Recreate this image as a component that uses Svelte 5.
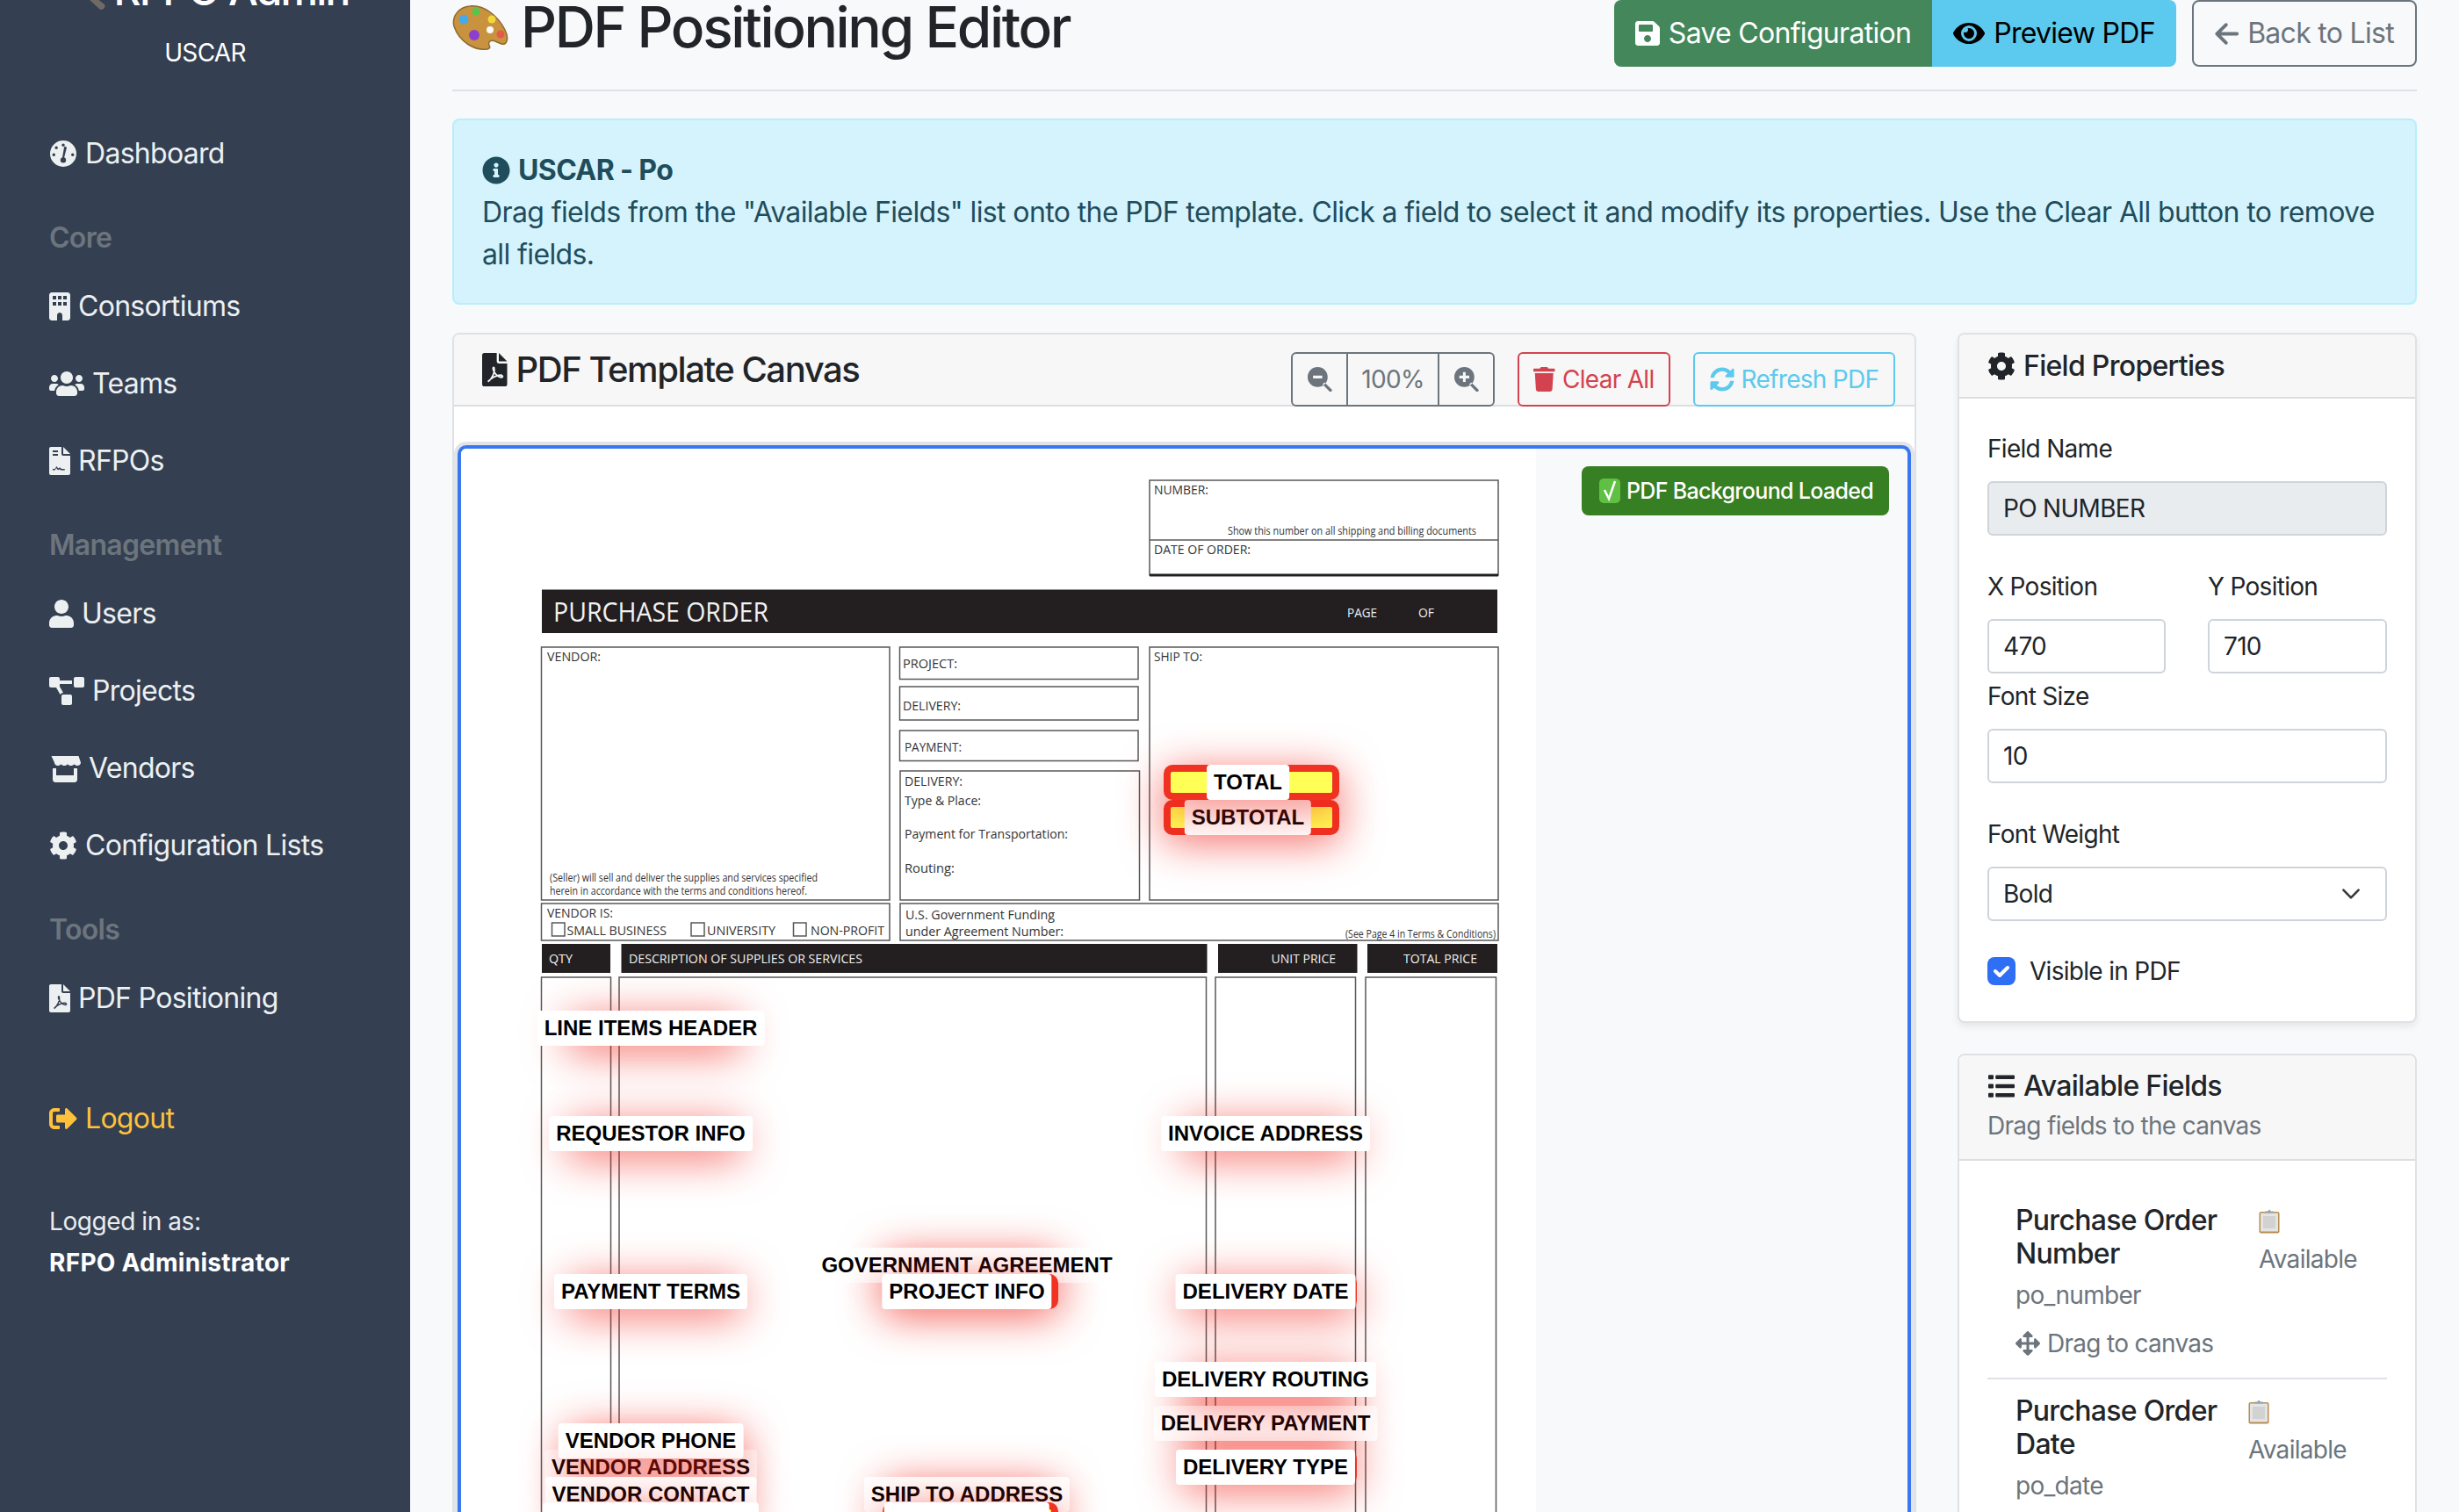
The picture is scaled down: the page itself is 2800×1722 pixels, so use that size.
<script>
  const icons = {
    gauge: { w: 512, d: 'M256 16a240 240 0 1 0 0 480 240 240 0 1 0 0-480zM256 70a28 28 0 1 1 0 56 28 28 0 0 1 0-56zM130 120a28 28 0 1 1 0 56 28 28 0 0 1 0-56zM84 246a28 28 0 1 1 0 56 28 28 0 0 1 0-56zM428 246a28 28 0 1 1 0 56 28 28 0 0 1 0-56zM205 372a51 51 0 1 0 102 0c0-22-14-40-33-47l44-175a24 24 0 0 0-46-10l-32 185c-20 7-35 25-35 47z' },
    building: { w: 384, d: 'M48 0h288c26 0 48 22 48 48v416c0 26-22 48-48 48H240v-96c0-26-22-48-48-48s-48 22-48 48v96H48c-26 0-48-22-48-48V48C0 22 22 0 48 0zM64 64h64v64H64zM160 64h64v64h-64zM256 64h64v64h-64zM64 176h64v64H64zM160 176h64v64h-64zM256 176h64v64h-64z' },
    users: { w: 640, d: 'M96 224c35.3 0 64-28.7 64-64s-28.7-64-64-64-64 28.7-64 64 28.7 64 64 64zm448 0c35.3 0 64-28.7 64-64s-28.7-64-64-64-64 28.7-64 64 28.7 64 64 64zm32 32h-64c-17.6 0-33.5 7.1-45.1 18.6 40.3 22.1 68.9 62 75.1 109.4h66c17.7 0 32-14.3 32-32v-32c0-35.3-28.7-64-64-64zm-256 0c61.9 0 112-50.1 112-112S381.9 32 320 32 208 82.1 208 144s50.1 112 112 112zm76.8 32h-8.3c-20.8 10-43.9 16-68.5 16s-47.6-6-68.5-16h-8.3C179.6 288 128 339.6 128 403.2V432c0 26.5 21.5 48 48 48h288c26.5 0 48-21.5 48-48v-28.8c0-63.6-51.6-115.2-115.2-115.2zm-223.7-13.4C161.5 263.1 145.6 256 128 256H64c-35.3 0-64 28.7-64 64v32c0 17.7 14.3 32 32 32h65.9c6.3-47.4 34.9-87.3 75.2-109.4z' },
    invoice: { w: 384, d: 'M224 0H32C14 0 0 14 0 32v448c0 18 14 32 32 32h320c18 0 32-14 32-32V160H256c-18 0-32-14-32-32V0zM256 0l128 128H256zM64 64h96v32H64zM64 128h96v32H64zM64 400h40l30-50 30 40 30-20 30 30h60v24h-75l-20-20-30 20-30-40-25 40H64z' },
    pdf: { w: 384, d: 'M224 0H32C14 0 0 14 0 32v448c0 18 14 32 32 32h320c18 0 32-14 32-32V160H256c-18 0-32-14-32-32V0zM256 0l128 128H256z', hole: 'M90 440C140 410 200 300 185 235C180 210 160 220 170 255C190 325 260 385 305 372C325 365 310 340 280 340C220 340 130 390 90 440Z' },
    user: { w: 448, d: 'M224 256c70.7 0 128-57.3 128-128S294.7 0 224 0 96 57.3 96 128s57.3 128 128 128zm89.6 32h-16.7c-22.2 10.2-46.9 16-72.9 16s-50.6-5.8-72.9-16h-16.7C60.2 288 0 348.2 0 422.4V464c0 26.5 21.5 48 48 48h352c26.5 0 48-21.5 48-48v-41.6c0-74.2-60.2-134.4-134.4-134.4z' },
    diagram: { w: 640, d: 'M384 320H256c-17.67 0-32 14.33-32 32v128c0 17.67 14.33 32 32 32h128c17.67 0 32-14.33 32-32V352c0-17.67-14.33-32-32-32zM192 32c0-17.67-14.33-32-32-32H32C14.33 0 0 14.33 0 32v128c0 17.67 14.33 32 32 32h95.72l73.16 128.04C211.98 300.98 232.4 288 256 288h.28L192 175.51V128h224V64H192V32zM608 0H480c-17.67 0-32 14.33-32 32v128c0 17.67 14.33 32 32 32h128c17.67 0 32-14.33 32-32V32c0-17.67-14.33-32-32-32z' },
    store: { w: 576, d: 'M40 32h496l40 120c0 35-29 56-60 56-25 0-45-14-60-30-12 16-34 30-60 30s-48-14-60-30c-12 16-34 30-60 30s-48-14-60-30c-15 16-35 30-60 30-31 0-60-21-60-56zM64 256h64v128h320V256h64v208c0 26-22 48-48 48H112c-26 0-48-22-48-48z' },
    cog: { w: 512, d: 'M487.4 315.7l-42.6-24.6c4.3-23.2 4.3-47 0-70.2l42.6-24.6c4.9-2.8 7.1-8.6 5.5-14-11.1-35.6-30-67.8-54.7-94.6-3.8-4.1-10-5.1-14.8-2.3L380.8 110c-17.9-15.4-38.5-27.3-60.8-35.1V25.8c0-5.6-3.9-10.5-9.4-11.7-36.7-8.2-74.3-7.8-109.2 0-5.5 1.2-9.4 6.1-9.4 11.7V75c-22.2 7.9-42.8 19.8-60.8 35.1L88.7 85.5c-4.9-2.8-11-1.9-14.8 2.3-24.7 26.7-43.6 58.9-54.7 94.6-1.7 5.4.6 11.2 5.5 14L67.3 221c-4.3 23.2-4.3 47 0 70.2l-42.6 24.6c-4.9 2.8-7.1 8.6-5.5 14 11.1 35.6 30 67.8 54.7 94.6 3.8 4.1 10 5.1 14.8 2.3l42.6-24.6c17.9 15.4 38.5 27.3 60.8 35.1v49.2c0 5.6 3.9 10.5 9.4 11.7 36.7 8.2 74.3 7.8 109.2 0 5.5-1.2 9.4-6.1 9.4-11.7v-49.2c22.2-7.9 42.8-19.8 60.8-35.1l42.6 24.6c4.9 2.8 11 1.9 14.8-2.3 24.7-26.7 43.6-58.9 54.7-94.6 1.5-5.5-.7-11.3-5.6-14.1zM256 336c-44.1 0-80-35.9-80-80s35.9-80 80-80 80 35.9 80 80-35.9 80-80 80z' },
    logout: { w: 512, d: 'M497 273L329 441c-15 15-41 4.5-41-17v-96H152c-13.3 0-24-10.7-24-24v-96c0-13.3 10.7-24 24-24h136V88c0-21.4 25.9-32 41-17l168 168c9.3 9.4 9.3 24.6 0 34zM192 436v-40c0-6.6-5.4-12-12-12H96c-17.7 0-32-14.3-32-32V160c0-17.7 14.3-32 32-32h84c6.6 0 12-5.4 12-12V76c0-6.6-5.4-12-12-12H96c-53 0-96 43-96 96v192c0 53 43 96 96 96h84c6.6 0 12-5.4 12-12z' },
    save: { w: 448, d: 'M433.941 129.941l-83.882-83.882A48 48 0 0 0 316.118 32H48C21.49 32 0 53.49 0 80v352c0 26.51 21.49 48 48 48h352c26.51 0 48-21.49 48-48V163.882a48 48 0 0 0-14.059-33.941zM224 416c-35.346 0-64-28.654-64-64 0-35.346 28.654-64 64-64s64 28.654 64 64c0 35.346-28.654 64-64 64zm96-304.52V212c0 6.627-5.373 12-12 12H76c-6.627 0-12-5.373-12-12V108c0-6.627 5.373-12 12-12h228.52c3.183 0 6.235 1.264 8.485 3.515l3.48 3.48A11.996 11.996 0 0 1 320 111.48z' },
    eye: { w: 576, d: 'M572.52 241.4C518.29 135.59 410.93 64 288 64S57.68 135.64 3.48 241.41a32.35 32.35 0 0 0 0 29.19C57.71 376.41 165.07 448 288 448s230.32-71.64 284.52-177.41a32.35 32.35 0 0 0 0-29.19zM288 400a144 144 0 1 1 144-144 143.93 143.93 0 0 1-144 144zm0-240a95.31 95.31 0 0 0-25.31 3.79 47.85 47.85 0 0 1-66.9 66.9A95.78 95.78 0 1 0 288 160z' },
    back: { w: 448, d: 'M18 233L190 61a32 32 0 0 1 45 45L118 224h298a32 32 0 0 1 0 64H118l117 118a32 32 0 0 1-45 45L18 279a32 32 0 0 1 0-46z' },
    info: { w: 512, d: 'M256 8C119.043 8 8 119.083 8 256c0 136.997 111.043 248 248 248s248-111.003 248-248C504 119.083 392.957 8 256 8zm0 110c23.196 0 42 18.804 42 42s-18.804 42-42 42-42-18.804-42-42 18.804-42 42-42zm56 254c0 6.627-5.373 12-12 12h-88c-6.627 0-12-5.373-12-12v-24c0-6.627 5.373-12 12-12h12v-64h-12c-6.627 0-12-5.373-12-12v-24c0-6.627 5.373-12 12-12h64c6.627 0 12 5.373 12 12v100h12c6.627 0 12 5.373 12 12v24z' },
    zoomOut: { w: 512, d: 'M208 0a208 208 0 1 0 0 416 208 208 0 1 0 0-416zM112 180h192v56H112zM352 320L500 468a30 30 0 0 1-42 42L310 362z' },
    zoomIn: { w: 512, d: 'M208 0a208 208 0 1 0 0 416 208 208 0 1 0 0-416zM180 104h56v76h76v56h-76v76h-56v-76h-76v-56h76zM352 320L500 468a30 30 0 0 1-42 42L310 362z' },
    trash: { w: 448, d: 'M432 32H312l-9.4-18.7A24 24 0 0 0 281.1 0H166.8a23.72 23.72 0 0 0-21.4 13.3L136 32H16A16 16 0 0 0 0 48v32a16 16 0 0 0 16 16h416a16 16 0 0 0 16-16V48a16 16 0 0 0-16-16zM53.2 467a48 48 0 0 0 47.9 45h245.8a48 48 0 0 0 47.9-45L416 128H32z' },
    sync: { w: 512, d: 'M370.72 133.28C339.458 104.008 298.888 87.962 255.848 88c-77.458.068-144.328 53.178-162.791 126.85-1.344 5.363-6.122 9.15-11.651 9.15H24.103c-7.498 0-13.194-6.807-11.807-14.176C33.933 94.924 134.813 8 256 8c66.448 0 126.791 26.136 171.315 68.685L463.03 40.97C478.149 25.851 504 36.559 504 57.941V192c0 13.255-10.745 24-24 24H345.941c-21.382 0-32.09-25.851-16.971-40.971l41.75-41.749zM32 296h134.059c21.382 0 32.09 25.851 16.971 40.971l-41.75 41.75c31.262 29.273 71.835 45.319 114.876 45.28 77.418-.07 144.315-53.144 162.787-126.849 1.344-5.363 6.122-9.15 11.651-9.15h57.304c7.498 0 13.194 6.807 11.807 14.176C478.067 417.076 377.187 504 256 504c-66.448 0-126.791-26.136-171.315-68.685L48.97 471.03C33.851 486.149 8 475.441 8 454.059V320c0-13.255 10.745-24 24-24z' },
    list: { w: 512, d: 'M16 68a16 16 0 0 1 16-16h64a16 16 0 0 1 16 16v48a16 16 0 0 1-16 16H32a16 16 0 0 1-16-16zM16 232a16 16 0 0 1 16-16h64a16 16 0 0 1 16 16v48a16 16 0 0 1-16 16H32a16 16 0 0 1-16-16zM16 396a16 16 0 0 1 16-16h64a16 16 0 0 1 16 16v48a16 16 0 0 1-16 16H32a16 16 0 0 1-16-16zM148 72a16 16 0 0 1 16-16h316a16 16 0 0 1 16 16v40a16 16 0 0 1-16 16H164a16 16 0 0 1-16-16zM148 236a16 16 0 0 1 16-16h316a16 16 0 0 1 16 16v40a16 16 0 0 1-16 16H164a16 16 0 0 1-16-16zM148 400a16 16 0 0 1 16-16h316a16 16 0 0 1 16 16v40a16 16 0 0 1-16 16H164a16 16 0 0 1-16-16z' },
    move: { w: 512, d: 'M352.201 425.775l-79.196 79.196c-9.373 9.373-24.568 9.373-33.941 0l-79.196-79.196c-15.119-15.119-4.411-40.971 16.971-40.97h51.162L228 284H127.196v51.162c0 21.382-25.851 32.09-40.971 16.971L7.029 272.937c-9.373-9.373-9.373-24.569 0-33.941L86.225 159.8c15.119-15.119 40.971-4.411 40.971 16.971V228H228V127.196h-51.23c-21.382 0-32.09-25.851-16.971-40.971l79.196-79.196c9.373-9.373 24.568-9.373 33.941 0l79.196 79.196c15.119 15.119 4.411 40.971-16.971 40.971h-51.162V228h100.804v-51.162c0-21.382 25.851-32.09 40.97-16.971l79.196 79.196c9.373 9.373 9.373 24.569 0 33.941L425.773 352.2c-15.119 15.119-40.971 4.411-40.97-16.971V284H284v100.804h51.23c21.382 0 32.09 25.851 16.971 40.971z' }
  };

  const nav = [
    { type: 'link', icon: 'gauge', label: 'Dashboard' },
    { type: 'title', label: 'Core' },
    { type: 'link', icon: 'building', label: 'Consortiums' },
    { type: 'link', icon: 'users', label: 'Teams' },
    { type: 'link', icon: 'invoice', label: 'RFPOs' },
    { type: 'title', label: 'Management' },
    { type: 'link', icon: 'user', label: 'Users' },
    { type: 'link', icon: 'diagram', label: 'Projects' },
    { type: 'link', icon: 'store', label: 'Vendors' },
    { type: 'link', icon: 'cog', label: 'Configuration Lists' },
    { type: 'title', label: 'Tools' },
    { type: 'link', icon: 'pdf', label: 'PDF Positioning' }
  ];

  // printed boxes of the purchase order form, in page pixels
  const boxes = [
    [1309, 547, 397, 108], [616.5, 737, 396.5, 288], [616.5, 1029, 396.5, 42],
    [1024.5, 737, 271.5, 36.5], [1024.5, 782, 271.5, 38], [1024.5, 832, 271.5, 34.5],
    [1025, 878, 272.5, 147], [1309, 737, 397, 288], [1025, 1029, 681, 42],
    [628.5, 1051, 14.5, 15], [787, 1051, 15, 15], [903.5, 1051, 14.5, 15],
    [616.5, 1113, 79, 700], [705, 1113, 668.5, 700], [1384, 1113, 159.5, 700], [1555, 1113, 148.5, 700]
  ];
  const bars = [
    [617, 671.5, 1088, 49.5], [617, 1075, 78, 33], [707.5, 1075, 667, 33], [1387, 1075, 158.5, 33], [1557, 1075, 148, 33]
  ];
  const printed = [
    ['NUMBER:', 1314, 563, 62, 15], ['Show this number on all shipping and billing documents', 1398, 609, 283, 13],
    ['DATE OF ORDER:', 1314, 631, 110, 15], ['VENDOR:', 623, 752.5, 61, 15],
    ['(Seller) will sell and deliver the supplies and services specified', 626, 1004, 305, 12],
    ['herein in accordance with the terms and conditions hereof.', 626, 1019, 293, 12],
    ['VENDOR IS:', 623, 1044.5, 75, 15], ['SMALL BUSINESS', 645.5, 1065, 113.5, 15],
    ['UNIVERSITY', 805, 1065, 78, 15], ['NON-PROFIT', 923, 1065, 84, 15],
    ['PROJECT:', 1028, 761, 62, 15], ['DELIVERY:', 1028, 809, 66, 15], ['PAYMENT:', 1030, 856, 65, 15],
    ['DELIVERY:', 1030, 895, 66, 15], ['Type & Place:', 1030, 917, 87, 15],
    ['Payment for Transportation:', 1030, 954.5, 186, 15], ['Routing:', 1030, 994, 57, 15],
    ['SHIP TO:', 1314, 752.5, 55, 15], ['U.S. Government Funding', 1031, 1046.5, 170, 15],
    ['under Agreement Number:', 1031, 1065.5, 180, 15], ['(See Page 4 in Terms & Conditions)', 1532, 1068, 171, 13]
  ];
  const printedLight = [
    ['PURCHASE ORDER', 630, 708, 245, 31], ['PAGE', 1534, 703, 34, 14], ['OF', 1615, 703, 18, 14],
    ['QTY', 625, 1097, 27, 14], ['DESCRIPTION OF SUPPLIES OR SERVICES', 716, 1097, 266, 14],
    ['UNIT PRICE', 1447.5, 1097, 73.5, 14], ['TOTAL PRICE', 1598, 1097, 84, 14]
  ];

  // dropped fields: [label, box left, box top] in page pixels, later ones paint over earlier ones
  const fields = [
    ['SUBTOTAL', 1325, 911], ['TOTAL', 1325, 871],
    ['LINE ITEMS HEADER', 645, 1151], ['REQUESTOR INFO', 645, 1271], ['PAYMENT TERMS', 645, 1451],
    ['VENDOR ADDRESS', 645, 1651], ['VENDOR PHONE', 645, 1621], ['VENDOR CONTACT', 645, 1682], ['VENDOR COMPANY', 645, 1711],
    ['GOVERNMENT AGREEMENT', 1005, 1421], ['PROJECT INFO', 1005, 1451],
    ['SHIP TO ADDRESS', 1005, 1682], ['SHIP TO NAME', 1005, 1711],
    ['INVOICE ADDRESS', 1345, 1271], ['DELIVERY PAYMENT', 1345, 1601], ['DELIVERY ROUTING', 1345, 1551],
    ['DELIVERY TYPE', 1345, 1651], ['DELIVERY DATE', 1345, 1451]
  ];
</script>

{#snippet icon(name, height)}
  <svg class="icon" viewBox="0 0 {icons[name].w} 512" height={height} width={height * icons[name].w / 512}>
    <path fill="currentColor" fill-rule="evenodd" d={icons[name].d} />
    {#if icons[name].hole}
      <path class="hole" d={icons[name].hole} />
    {/if}
  </svg>
{/snippet}

{#snippet clipboard()}
  <svg class="clip" viewBox="0 0 24 28" width="24" height="28">
    <rect x="0.5" y="3" width="23" height="24.5" rx="2" fill="#b98c52" />
    <rect x="2" y="4.5" width="20" height="21" fill="#e4e4e4" />
    <rect x="5" y="8" width="14" height="14" fill="#d2d2d2" />
    <path d="M7 4.5h10V2.5h-3L12 0.5 10 2.5H7z" fill="#9aa3ad" />
  </svg>
{/snippet}

<div class="app">
  <aside class="sidebar">
    <div class="brand">
      <svg viewBox="0 0 58 14" width="58" height="14">
        <path d="M38 0L48 0L57 7A4 4 0 0 1 51 12z" fill="#6f6a66" />
      </svg>
      <span>RFPO Admin</span>
    </div>
    <div class="org">USCAR</div>
    <nav>
      {#each nav as item}
        {#if item.type === 'title'}
          <div class="nav-title">{item.label}</div>
        {:else}
          <a class="nav-link" href="#top">{@render icon(item.icon, 32)}<span>{item.label}</span></a>
        {/if}
      {/each}
      <a class="nav-link logout" href="#top">{@render icon('logout', 32)}<span>Logout</span></a>
    </nav>
    <div class="whoami">
      <div>Logged in as:</div>
      <strong>RFPO Administrator</strong>
    </div>
  </aside>

  <main class="main">
    <header class="page-head">
      <h1>
        <svg class="palette" viewBox="0 0 64 52" width="64" height="52">
          <path d="M20 1C36-1 52 12 60 28c5 10 2 18-4 16-6-2-11-6-14-2-2 4 4 6-2 8C26 52 8 42 2 24-1 12 8 2 20 1z" fill="#c8923e" stroke="#8d6a30" stroke-width="1.5" />
          <circle cx="13" cy="16" r="5.5" fill="#4aa8e8" />
          <circle cx="27" cy="7" r="4.5" fill="#5cc24a" />
          <circle cx="45" cy="16" r="4.5" fill="#f2d63c" />
          <circle cx="25" cy="34" r="6" fill="#8a3fd0" />
          <circle cx="43" cy="28" r="4" fill="#f8f9fa" />
          <circle cx="55" cy="33" r="4.5" fill="#e8584a" />
        </svg>
        PDF Positioning Editor
      </h1>
      <div class="actions">
        <div class="btn-group">
          <button class="btn save">{@render icon('save', 32)}Save Configuration</button>
          <button class="btn preview">{@render icon('eye', 32)}Preview PDF</button>
        </div>
        <button class="btn back">{@render icon('back', 31)}Back to List</button>
      </div>
    </header>

    <section class="alert">
      <strong>{@render icon('info', 32)}USCAR - Po</strong>
      <div>Drag fields from the "Available Fields" list onto the PDF template. Click a field to select it and modify its properties. Use the Clear All button to remove all fields.</div>
    </section>

    <div class="workspace">
      <section class="card canvas-card">
        <div class="card-head canvas-head">
          <h2>{@render icon('pdf', 38)}PDF Template Canvas</h2>
          <div class="tools">
            <div class="zoom-group">
              <button class="sm zoom-btn">{@render icon('zoomOut', 28)}</button>
              <span class="zoom-level">100%</span>
              <button class="sm zoom-btn">{@render icon('zoomIn', 28)}</button>
            </div>
            <button class="sm clear">{@render icon('trash', 28)}Clear All</button>
            <button class="sm refresh">{@render icon('sync', 28)}Refresh PDF</button>
          </div>
        </div>
        <div class="canvas-wrap">
          <div class="canvas">
            <svg class="page" viewBox="525 511 1224 1300" width="1224" height="1300">
              <rect x="525" y="511" width="1224" height="1300" fill="#fff" />
              {#each bars as [x, y, w, h]}
                <rect {x} {y} width={w} height={h} fill="#231f20" />
              {/each}
              {#each boxes as [x, y, w, h]}
                <rect {x} {y} width={w} height={h} fill="none" stroke="#58585a" stroke-width="1.5" />
              {/each}
              <line x1="1309" y1="615" x2="1706" y2="615" stroke="#58585a" stroke-width="1.5" />
              <line x1="1309" y1="655" x2="1706" y2="655" stroke="#231f20" stroke-width="3" />
              {#each printed as [t, x, y, w, s]}
                <text {x} {y} font-size={s} textLength={w} lengthAdjust="spacingAndGlyphs" fill="#333">{t}</text>
              {/each}
              {#each printedLight as [t, x, y, w, s]}
                <text {x} {y} font-size={s} textLength={w} lengthAdjust="spacingAndGlyphs" fill="#f1f1f1">{t}</text>
              {/each}
            </svg>
            {#each fields as [label, x, y]}
              <div class="field" style="left: {x - 525}px; top: {y - 511}px">
                <span>{label}</span>
              </div>
            {/each}
            <div class="loaded">
              <svg viewBox="0 0 24 32" width="24" height="32">
                <rect x="0" y="2" width="24" height="28" rx="5" fill="#5fc043" />
                <path d="M6 15l5 10 7-20" fill="none" stroke="#fff" stroke-width="2.5" />
              </svg>
              PDF Background Loaded
            </div>
          </div>
        </div>
      </section>

      <aside class="side">
        <section class="card props">
          <div class="card-head side-head"><h3>{@render icon('cog', 32)}Field Properties</h3></div>
          <div class="props-body">
            <div class="group">
              <div class="lbl">Field Name</div>
              <input class="ctl" readonly value="PO NUMBER" />
            </div>
            <div class="pair">
              <div>
                <div class="lbl">X Position</div>
                <input class="ctl" readonly value="470" />
              </div>
              <div>
                <div class="lbl">Y Position</div>
                <input class="ctl" readonly value="710" />
              </div>
            </div>
            <div class="group">
              <div class="lbl">Font Size</div>
              <input class="ctl" readonly value="10" />
            </div>
            <div class="group">
              <div class="lbl">Font Weight</div>
              <div class="select">
                <span>Bold</span>
                <svg viewBox="0 0 24 14" width="22" height="12"><path d="M2 2l10 10L22 2" fill="none" stroke="#343a40" stroke-width="3" stroke-linecap="round" stroke-linejoin="round" /></svg>
              </div>
            </div>
            <div class="check-row">
              <span class="check"><svg viewBox="0 0 32 32" width="32" height="32"><path d="M9 16l5 5 9-9" fill="none" stroke="#fff" stroke-width="4" stroke-linecap="round" stroke-linejoin="round" /></svg></span>
              Visible in PDF
            </div>
          </div>
        </section>

        <section class="card fields-card">
          <div class="card-head avail-head">
            <h3>{@render icon('list', 32)}Available Fields</h3>
            <div class="muted">Drag fields to the canvas</div>
          </div>
          <div class="avail-body">
            <div class="item">
              <div class="item-row">
                <div class="item-name">Purchase Order Number</div>
                <div class="item-status first">{@render clipboard()}<span class="muted">Available</span></div>
              </div>
              <div class="muted code">po_number</div>
              <div class="muted drag">{@render icon('move', 28)}Drag to canvas</div>
            </div>
            <div class="item">
              <div class="item-row">
                <div class="item-name">Purchase Order Date</div>
                <div class="item-status">{@render clipboard()}<span class="muted">Available</span></div>
              </div>
              <div class="muted code">po_date</div>
              <div class="muted drag">{@render icon('move', 28)}Drag to canvas</div>
            </div>
          </div>
        </section>
      </aside>
    </div>
  </main>
</div>

<style>
  :global(body) {
    margin: 0;
    background: #f8f9fa;
  }

  .app {
    display: flex;
    height: 1722px;
    overflow: hidden;
    font-family: Inter, "Liberation Sans", sans-serif;
    font-size: 32px;
    line-height: 48px;
    letter-spacing: -0.022em;
    color: #212529;
  }

  .icon {
    flex: none;
    display: block;
  }

  .hole {
    fill: none;
    stroke: var(--hole, #fff);
    stroke-width: 24;
  }

  /* sidebar */
  .sidebar {
    flex: none;
    width: 467px;
    height: 1722px;
    background: #343f52;
    color: #ecf0f1;
    --hole: #343f52;
  }

  .brand {
    display: flex;
    justify-content: center;
    align-items: flex-end;
    gap: 10px;
    margin: -40px 0 0 -8px;
    height: 58px;
    font-size: 48px;
    line-height: 58px;
    font-weight: 500;
    letter-spacing: -0.039em;
    color: #fff;
  }

  .brand svg {
    margin-bottom: 6px;
  }

  .org {
    margin-top: 21px;
    height: 42px;
    text-align: center;
    font-size: 28px;
    line-height: 42px;
    color: #fff;
  }

  nav {
    margin-top: 50px;
  }

  .nav-link {
    display: flex;
    align-items: center;
    gap: 9px;
    height: 88px;
    padding-left: 56px;
    color: #ecf0f1;
    text-decoration: none;
  }

  .nav-title {
    margin: 28px 0 10px;
    padding-left: 56px;
    font-weight: 600;
    color: #6c757d;
  }

  .logout {
    margin-top: 49px;
    color: #ffc13b;
  }

  .whoami {
    margin-top: 50px;
    padding-left: 56px;
    font-size: 28px;
    line-height: 47px;
    letter-spacing: -0.015em;
    color: #e9ecef;
  }

  .whoami strong {
    display: block;
    font-weight: 700;
    letter-spacing: 0.01em;
    color: #fff;
  }

  /* main column */
  .main {
    flex: 1;
    min-width: 0;
    padding: 0 48px;
  }

  .page-head {
    display: flex;
    justify-content: space-between;
    align-items: flex-start;
    height: 102px;
    border-bottom: 2px solid #dee2e6;
    margin-bottom: 31px;
  }

  h1 {
    display: flex;
    align-items: center;
    gap: 14px;
    margin: -8px 0 0;
    font-size: 64px;
    line-height: 77px;
    font-weight: 500;
    letter-spacing: -0.037em;
  }

  .palette {
    margin-top: 2px;
  }

  .actions {
    display: flex;
    gap: 18px;
  }

  .btn-group {
    display: flex;
  }

  .btn {
    display: flex;
    align-items: center;
    gap: 10px;
    height: 76px;
    padding: 0 26px;
    border: 2px solid transparent;
    border-radius: 8px;
    font: inherit;
    letter-spacing: inherit;
    background: none;
  }

  .save {
    width: 362px;
    justify-content: center;
    padding: 0;
    background: #43875b;
    color: #fff;
    border-radius: 8px 0 0 8px;
  }

  .preview {
    width: 278px;
    justify-content: center;
    padding: 0;
    background: #5cc9ee;
    color: #000;
    border-radius: 0 8px 8px 0;
  }

  .back {
    width: 256px;
    justify-content: center;
    padding: 0;
    border-color: #6c757d;
    color: #6c757d;
  }

  .alert {
    height: 212px;
    box-sizing: border-box;
    padding: 33px 32px 0;
    border: 2px solid #b6effb;
    border-radius: 8px;
    background: #d5f3fc;
    color: #1f4d5c;
    letter-spacing: -0.019em;
  }

  .alert strong {
    display: flex;
    align-items: center;
    gap: 9px;
    font-weight: 700;
  }

  .workspace {
    display: grid;
    grid-template-columns: 1fr 523px;
    gap: 48px;
    margin-top: 32px;
    align-items: start;
  }

  .card {
    border: 2px solid #dfe1e4;
    border-radius: 8px;
    background: #fff;
    box-sizing: border-box;
  }

  .card-head {
    background: #f7f7f7;
    border-bottom: 2px solid #dcdee0;
    border-radius: 6px 6px 0 0;
  }

  .canvas-card {
    height: 1500px;
    margin-right: -1px;
  }

  .canvas-head {
    display: flex;
    justify-content: space-between;
    height: 80px;
    padding: 0 22px 0 32px;
  }

  .canvas-head h2 {
    display: flex;
    align-items: center;
    gap: 10px;
    margin: 0;
    font-size: 40px;
    font-weight: 500;
    letter-spacing: -0.036em;
    color: #212529;
    --hole: #f7f7f7;
  }

  .tools {
    align-self: flex-end;
    display: flex;
    gap: 26px;
    margin-bottom: -2px;
  }

  .sm {
    display: flex;
    align-items: center;
    gap: 8px;
    box-sizing: border-box;
    height: 62px;
    border: 2px solid;
    border-radius: 6px;
    background: none;
    font: inherit;
    font-size: 28px;
    letter-spacing: inherit;
    padding: 0;
  }

  .zoom-group {
    display: flex;
    box-sizing: border-box;
    width: 232px;
    height: 62px;
    border: 2px solid #6c757d;
    border-radius: 6px;
    color: #6c757d;
  }

  .zoom-btn {
    flex: none;
    width: 61px;
    height: 58px;
    justify-content: center;
    border: 0;
    color: #6c757d;
  }

  .zoom-level {
    flex: 1;
    text-align: center;
    font-size: 28px;
    line-height: 58px;
    border-left: 2px solid #6c757d;
    border-right: 2px solid #6c757d;
  }

  .clear {
    width: 174px;
    justify-content: center;
    border-color: #d3434f;
    color: #d3434f;
  }

  .refresh {
    width: 230px;
    justify-content: center;
    border-color: #5cc9ee;
    color: #5cc9ee;
  }

  .canvas-wrap {
    padding: 44px 4px 0;
  }

  .canvas {
    position: relative;
    height: 1400px;
    overflow: hidden;
    border: 4px solid #3a78f2;
    border-radius: 10px;
    background: #f8f9fa;
    box-shadow: 0 0 0 4px #e1e4e8;
  }

  .page {
    position: absolute;
    left: 0;
    top: 0;
    font-family: "Open Sans", "Liberation Sans", sans-serif;
    letter-spacing: 0;
  }

  .field {
    position: absolute;
    box-sizing: border-box;
    width: 200px;
    height: 40px;
    border: 8px solid #ef3222;
    border-radius: 10px;
    background: #ffff55;
    box-shadow: 0 8px 48px rgba(240, 30, 20, 0.65);
  }

  .field span {
    position: absolute;
    left: calc(50% - 4px);
    top: -8px;
    transform: translateX(-50%);
    height: 40px;
    padding: 0 8px;
    border-radius: 4px;
    background: #fff;
    color: #000;
    font: 700 24px/40px "Liberation Sans", sans-serif;
    letter-spacing: 0;
    white-space: nowrap;
  }

  .loaded {
    position: absolute;
    left: 1276px;
    top: 20px;
    display: flex;
    align-items: center;
    gap: 7px;
    box-sizing: border-box;
    width: 350px;
    height: 56px;
    padding-left: 20px;
    border-radius: 8px;
    background: #367f22;
    color: #fff;
    font-size: 25px;
    font-weight: 500;
    letter-spacing: -0.027em;
  }

  /* right column */
  .side {
    display: flex;
    flex-direction: column;
    gap: 35px;
  }

  .props {
    box-shadow: 0 4px 8px rgba(0, 0, 0, 0.075);
  }

  .side-head {
    height: 71px;
    padding: 0 32px;
  }

  h3 {
    display: flex;
    align-items: center;
    gap: 9px;
    margin: 0;
    font-size: 32px;
    line-height: 71px;
    font-weight: 500;
  }

  .props-body {
    padding: 36px 32px 36px;
    font-size: 28px;
    line-height: 42px;
  }

  .group {
    margin-bottom: 37px;
  }

  .lbl {
    margin-bottom: 16px;
  }

  .ctl {
    display: block;
    box-sizing: border-box;
    width: 100%;
    height: 62px;
    padding: 0 16px;
    border: 2px solid #ced4da;
    border-radius: 6px;
    background: #fff;
    color: #212529;
    font: inherit;
    letter-spacing: inherit;
    outline: none;
  }

  .group:first-child .ctl {
    background: #e9ecef;
  }

  .pair {
    display: grid;
    grid-template-columns: 203px 204px;
    justify-content: space-between;
    margin-bottom: 5px;
  }

  .select {
    display: flex;
    justify-content: space-between;
    align-items: center;
    box-sizing: border-box;
    height: 62px;
    padding: 0 28px 0 16px;
    border: 2px solid #ced4da;
    border-radius: 6px;
  }

  .check-row {
    display: flex;
    align-items: center;
    gap: 16px;
    margin-top: -1px;
  }

  .check {
    width: 32px;
    height: 32px;
    border-radius: 8px;
    background: #2f6ff5;
  }

  .fields-card {
    height: 700px;
  }

  .avail-head {
    padding: 11px 32px 17px;
  }

  .avail-head h3 {
    line-height: 48px;
  }

  .muted {
    color: #6c757d;
    font-size: 28px;
    line-height: 42px;
  }

  .avail-body {
    padding: 49px 32px 0;
  }

  .item {
    height: 198px;
    padding-left: 32px;
    margin-bottom: 17px;
    border-bottom: 2px solid #dee2e6;
  }

  .item + .item {
    border-bottom: 0;
  }

  .item-row {
    display: flex;
    height: 76px;
  }

  .item-name {
    flex: none;
    width: 240px;
    font-size: 32px;
    line-height: 38px;
    font-weight: 500;
  }

  .item-status {
    margin-left: 25px;
  }

  .item-status.first {
    margin-left: 37px;
  }

  .item-status .muted {
    display: block;
    margin-top: 8px;
  }

  .clip {
    display: block;
    margin-top: 6px;
  }

  .code {
    margin-top: 7px;
  }

  .drag {
    display: flex;
    align-items: center;
    gap: 8px;
    margin-top: 13px;
  }
</style>
